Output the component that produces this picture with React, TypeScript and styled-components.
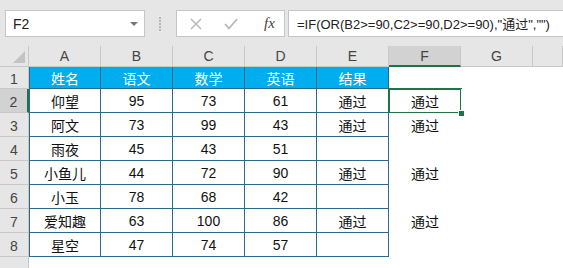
import styled, { createGlobalStyle } from 'styled-components';

const GlobalStyle = createGlobalStyle`
  html, body {
    margin: 0;
    padding: 0;
    background: #fff;
  }
  body {
    font-family: "Liberation Sans", "Noto Sans CJK SC", sans-serif;
  }
`;

const Page = styled.div`
  width: 563px;
  height: 268px;
  overflow: hidden;
  display: flex;
  flex-direction: column;
`;

const Bar = styled.div`
  height: 46px;
  flex: none;
  background: #e6e6e6;
  display: flex;
  align-items: flex-start;
  padding: 10px 0 0 5px;
  box-sizing: border-box;
`;

const NameBox = styled.div`
  width: 140px;
  height: 27px;
  box-sizing: border-box;
  background: #fff;
  border: 1px solid #c6c6c6;
  display: flex;
  align-items: center;
  justify-content: space-between;
  padding: 0 6px 0 7px;
  font-size: 14px;
  color: #222;
`;

const Caret = styled.span`
  width: 0;
  height: 0;
  border-left: 4px solid transparent;
  border-right: 4px solid transparent;
  border-top: 4px solid #777;
`;

const Grip = styled.div`
  width: 31px;
  height: 27px;
  display: flex;
  align-items: center;
  justify-content: center;
  svg { display: block; }
`;

const FxBox = styled.div`
  width: 109px;
  height: 27px;
  box-sizing: border-box;
  background: #fff;
  border: 1px solid #c6c6c6;
  display: flex;
  align-items: center;
  padding: 0 0 0 13px;
  gap: 22px;
  svg { display: block; }
`;

const Fx = styled.span`
  font-family: "Liberation Serif", serif;
  font-style: italic;
  font-size: 15px;
  color: #444;
  margin-left: 4px;
`;

const FormulaInput = styled.div`
  flex: 1;
  height: 27px;
  margin-left: 3px;
  margin-right: -20px;
  box-sizing: border-box;
  background: #fff;
  border: 1px solid #c6c6c6;
  display: flex;
  align-items: center;
  padding-left: 8px;
  font-size: 13px;
  color: #222;
  white-space: nowrap;
`;

const Sheet = styled.div`
  flex: 1;
  display: grid;
  grid-template-columns: 29px repeat(7, 72px) 1fr;
  grid-template-rows: 21px 22px repeat(8, 24px) 1fr;
`;

const Corner = styled.div`
  background: #e6e6e6;
  border-right: 1px solid #c8c8c8;
  border-bottom: 1px solid #c8c8c8;
  box-sizing: border-box;
  display: flex;
  align-items: flex-end;
  justify-content: flex-end;
  padding: 0 3px 3px 0;
`;

const Tri = styled.span`
  width: 0;
  height: 0;
  border-left: 12px solid transparent;
  border-bottom: 12px solid #c3c3c3;
`;

const ColHead = styled.div<{ $active?: boolean }>`
  background: ${({ $active }) => ($active ? '#d2d2d2' : '#e6e6e6')};
  border-right: 1px solid #c8c8c8;
  border-bottom: ${({ $active }) => ($active ? '2px solid #217346' : '1px solid #c8c8c8')};
  box-sizing: border-box;
  display: flex;
  align-items: center;
  justify-content: center;
  font-size: 14px;
  color: #444;
`;

const RowHead = styled.div<{ $active?: boolean }>`
  background: ${({ $active }) => ($active ? '#d2d2d2' : '#e6e6e6')};
  border-right: ${({ $active }) => ($active ? '2px solid #217346' : '1px solid #c8c8c8')};
  border-bottom: 1px solid #c8c8c8;
  box-sizing: border-box;
  display: flex;
  align-items: center;
  justify-content: center;
  padding-top: 2px;
  font-size: 14px;
  color: #444;
`;

const Cell = styled.div<{ $kind: 'head' | 'body' | 'plain'; $first?: boolean; $selected?: boolean }>`
  position: relative;
  box-sizing: border-box;
  display: flex;
  align-items: center;
  justify-content: center;
  font-size: 14px;
  color: ${({ $kind }) => ($kind === 'head' ? '#fff' : '#111')};
  background: ${({ $kind }) => ($kind === 'head' ? '#00adef' : '#fff')};
  border-right: ${({ $kind }) => ($kind === 'plain' ? 'none' : '1px solid #2b6a88')};
  border-bottom: ${({ $kind }) => ($kind === 'plain' ? 'none' : '1px solid #2b6a88')};
  border-left: ${({ $first }) => ($first ? '1px solid #2b6a88' : 'none')};

  ${({ $selected }) =>
    $selected &&
    `
    &::after {
      content: '';
      position: absolute;
      top: -1px;
      left: -1px;
      right: -1px;
      bottom: -1px;
      border: 2px solid #217346;
      pointer-events: none;
    }
  `}
`;

const Handle = styled.span`
  position: absolute;
  right: -4px;
  bottom: -4px;
  width: 5px;
  height: 5px;
  background: #217346;
  border: 1px solid #fff;
  z-index: 2;
`;

const cols = ['A', 'B', 'C', 'D', 'E', 'F', 'G', ''];
const head = ['姓名', '语文', '数学', '英语', '结果'];
const rows: (string | number)[][] = [
  ['仰望', 95, 73, 61, '通过', '通过'],
  ['阿文', 73, 99, 43, '通过', '通过'],
  ['雨夜', 45, 43, 51, '', ''],
  ['小鱼儿', 44, 72, 90, '通过', '通过'],
  ['小玉', 78, 68, 42, '', ''],
  ['爱知趣', 63, 100, 86, '通过', '通过'],
  ['星空', 47, 74, 57, '', ''],
];

export default function App() {
  return (
    <Page>
      <GlobalStyle />
      <Bar>
        <NameBox>
          F2
          <Caret />
        </NameBox>
        <Grip>
          <svg width="3" height="14" viewBox="0 0 3 14">
            {[1, 4, 7, 10, 13].map((y) => (
              <rect key={y} x="0" y={y - 1} width="2" height="2" fill="#b8b8b8" />
            ))}
          </svg>
        </Grip>
        <FxBox>
          <svg width="12" height="12" viewBox="0 0 12 12">
            <path d="M1 1 L11 11 M11 1 L1 11" stroke="#b5b5b5" strokeWidth="1.4" />
          </svg>
          <svg width="14" height="12" viewBox="0 0 14 12">
            <path d="M1 6 L5 10.5 L13 1" stroke="#b5b5b5" strokeWidth="1.6" fill="none" />
          </svg>
          <Fx>fx</Fx>
        </FxBox>
        <FormulaInput>=IF(OR(B2&gt;=90,C2&gt;=90,D2&gt;=90),"通过","")</FormulaInput>
      </Bar>
      <Sheet>
        <Corner>
          <Tri />
        </Corner>
        {cols.map((c, i) => (
          <ColHead key={i} $active={c === 'F'}>
            {c}
          </ColHead>
        ))}

        <RowHead>1</RowHead>
        {head.map((h, i) => (
          <Cell key={h} $kind="head" $first={i === 0}>
            {h}
          </Cell>
        ))}
        <Cell $kind="plain" />
        <Cell $kind="plain" />
        <Cell $kind="plain" />

        {rows.map((r, ri) => (
          <>
            <RowHead key={`h${ri}`} $active={ri === 0}>
              {ri + 2}
            </RowHead>
            {r.slice(0, 5).map((v, ci) => (
              <Cell key={`${ri}-${ci}`} $kind="body" $first={ci === 0}>
                {v}
              </Cell>
            ))}
            <Cell key={`${ri}-f`} $kind="plain" $selected={ri === 0}>
              {r[5]}
              {ri === 0 && <Handle />}
            </Cell>
            <Cell key={`${ri}-g`} $kind="plain" />
            <Cell key={`${ri}-h`} $kind="plain" />
          </>
        ))}

        <RowHead />
        {cols.map((_, i) => (
          <Cell key={`9-${i}`} $kind="plain" />
        ))}
      </Sheet>
    </Page>
  );
}
